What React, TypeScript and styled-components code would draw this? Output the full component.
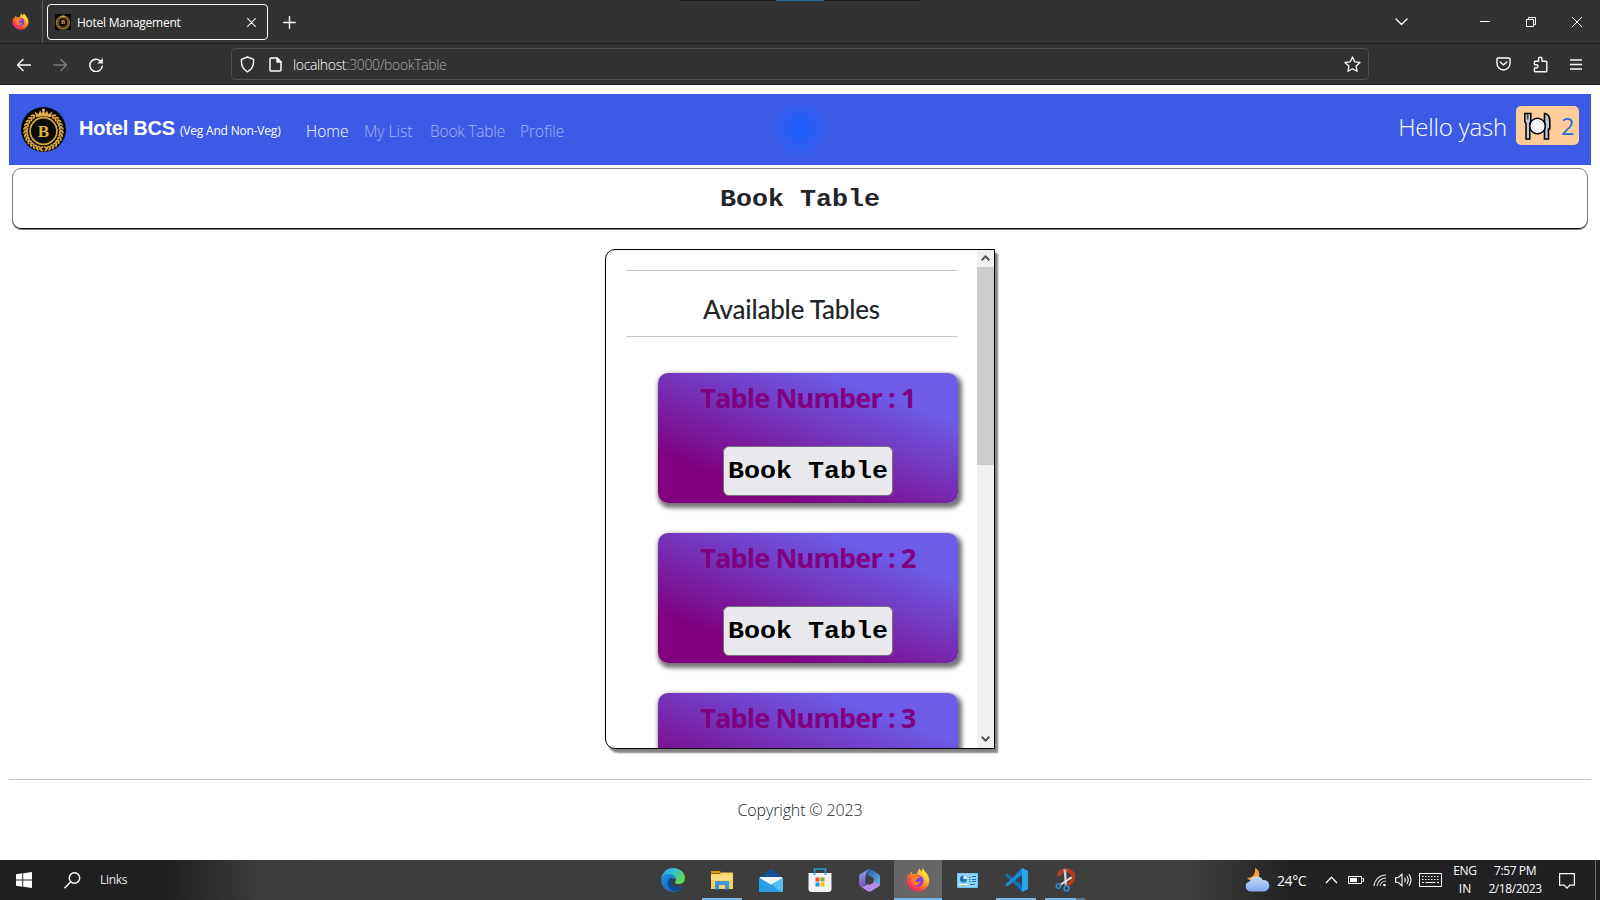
import React from "react";
import styled, { createGlobalStyle } from "styled-components";

const Global = createGlobalStyle`
  * { box-sizing: border-box; }
  html, body { margin: 0; padding: 0; background: #fff; overflow: hidden; }
  body { font-family: "Open Sans", "Noto Sans", sans-serif; color: #212529; }
  svg { display: block; flex: none; }
`;

const Screen = styled.div`
  width: 1600px;
  height: 900px;
  display: flex;
  flex-direction: column;
  overflow: hidden;
`;

const Label = styled.span<{ $size: number; $track?: number; $color?: string; $ml?: number; $w?: number; $drop?: number; $light?: boolean }>`
  flex: none;
  white-space: nowrap;
  font-size: ${(p) => p.$size}px;
  font-weight: ${(p) => (p.$light ? 350 : 400)};
  line-height: 20px;
  letter-spacing: ${(p) => p.$track ?? 0}px;
  color: ${(p) => p.$color ?? "#fff"};
  margin-left: ${(p) => p.$ml ?? 0}px;
  margin-top: ${(p) => p.$drop ?? 0}px;
  width: ${(p) => (p.$w ? `${p.$w}px` : "auto")};
`;

const Slot = styled.div<{ $ml?: number; $mt?: number }>`
  flex: none;
  margin-left: ${(p) => p.$ml ?? 0}px;
  margin-top: ${(p) => p.$mt ?? 0}px;
`;

/* Browser chrome */
const TabStrip = styled.header`
  height: 44px;
  flex: none;
  display: flex;
  align-items: center;
  background: #323232;
  border-bottom: 1px solid #1e1e1e;
  position: relative;
`;
const TopHandle = styled.div`
  position: absolute;
  top: 0;
  left: 680px;
  width: 241px;
  height: 1px;
  background: linear-gradient(90deg, #1c1c1c 96px, #2a6f9f 96px, #2a6f9f 144px, #1c1c1c 144px);
`;
const PinnedCell = styled.div`
  width: 43px;
  height: 43px;
  padding: 13px 0 0 12px;
  border-right: 1px solid #5c5c5c;
`;
const Tab = styled.div`
  width: 221px;
  height: 36px;
  margin: 1px 0 0 4px;
  padding: 0 11px 0 7px;
  border: 1px solid #fff;
  border-radius: 4px;
  display: flex;
  align-items: center;
`;
const Spacer = styled.div`
  flex: 1;
`;
const WindowButtons = styled.div`
  display: flex;
  align-items: center;
  padding-right: 18px;
`;
const Toolbar = styled.div`
  height: 41px;
  flex: none;
  display: flex;
  align-items: center;
  background: #323232;
  border-bottom: 1px solid #1e1e1e;
  padding: 0 18px 0 17px;
`;
const AddressBar = styled.div`
  width: 1138px;
  height: 32px;
  margin-left: 128px;
  padding: 0 7px 0 8px;
  border: 1px solid #505050;
  border-radius: 4px;
  display: flex;
  align-items: center;
`;

/* Web page */
const Page = styled.main`
  height: 775px;
  flex: none;
  padding: 9px 9px 0;
  display: flex;
  flex-direction: column;
`;
const NavBar = styled.nav`
  height: 71px;
  flex: none;
  padding: 0 12px;
  display: flex;
  align-items: flex-start;
  background: radial-gradient(circle at 791px 35px, #1a62fd 0, #2a5ef2 14px, #3c5ae6 30px);
`;
const Brand = styled(Label)`
  font-family: "Liberation Sans", Arial, sans-serif;
  font-weight: 700;
`;
const CartBadge = styled.div`
  width: 63px;
  height: 39px;
  margin: 12px 0 0 9px;
  padding-left: 7px;
  border-radius: 5px;
  background: #fecb9b;
  display: flex;
  align-items: center;
`;
const CourierText = styled.span<{ $color: string }>`
  display: inline-block;
  font-family: "Liberation Mono", "Courier New", monospace;
  font-weight: 700;
  font-size: 26.67px;
  line-height: 30px;
  margin-top: 2px;
  transform: scaleY(0.9);
  color: ${(p) => p.$color};
  white-space: nowrap;
`;
const TitleBox = styled.section`
  height: 62px;
  flex: none;
  margin: 3px 3px 0;
  border: 1px solid #857f82;
  border-radius: 9px;
  box-shadow: inset 0 -1px 0 #111;
  display: flex;
  align-items: center;
  justify-content: center;
`;
const Panel = styled.section`
  width: 390px;
  height: 500px;
  flex: none;
  margin: 19px auto 0;
  border: 1px solid #000;
  border-radius: 10px 0 0 10px;
  box-shadow: 3px 4px 2px #868286;
  display: flex;
  overflow: hidden;
`;
const PanelBody = styled.div`
  flex: 1;
  padding: 20px 20px 0;
  overflow: hidden;
`;
const PanelHeading = styled.h2`
  margin: 0;
  height: 67px;
  border-top: 1px solid #c7c8c9;
  border-bottom: 1px solid #c7c8c9;
  padding-top: 22px;
  text-align: center;
  font-family: Lato, sans-serif;
  font-weight: 500;
  font-size: 26px;
  line-height: 32px;
  letter-spacing: -0.2px;
`;
const CardList = styled.div`
  padding: 36px 0 0 32px;
  display: flex;
  flex-direction: column;
  gap: 30px;
`;
const Card = styled.article`
  width: 300px;
  height: 130px;
  flex: none;
  border-radius: 10px;
  background: linear-gradient(20deg, #800080 20%, #6c5ce7 80%);
  box-shadow: 2px 3px 4px 2px #787478;
  display: flex;
  flex-direction: column;
  align-items: center;
`;
const CardTitle = styled.h3`
  margin: 5px 0 0;
  height: 40px;
  font-size: 27px;
  line-height: 40px;
  font-weight: 700;
  letter-spacing: -0.85px;
  color: #800080;
  white-space: nowrap;
`;
const BookButton = styled.button`
  width: 170px;
  height: 50px;
  margin-top: 28px;
  padding: 0;
  border: 1px solid #77717f;
  border-radius: 6px;
  background: #e9e9ed;
  display: flex;
  align-items: center;
  justify-content: center;
`;
const ScrollTrack = styled.div`
  width: 17px;
  flex: none;
  background: #f0f0f0;
  display: flex;
  flex-direction: column;
  align-items: center;
  justify-content: space-between;
`;
const ScrollArrow = styled.div`
  height: 17px;
  padding-top: 5px;
`;
const ScrollThumb = styled.div`
  width: 17px;
  height: 198px;
  margin-bottom: auto;
  background: #cdcdcd;
`;
const Footer = styled.footer`
  margin-top: 30px;
  border-top: 1px solid #c3c3c3;
  padding-top: 20px;
  display: flex;
  justify-content: center;
`;

/* Taskbar */
const TaskBar = styled.footer`
  height: 40px;
  flex: none;
  display: flex;
  align-items: center;
  background: linear-gradient(90deg, #202022 0, #202022 170px, #3c3c3c 260px, #3e3e3e 1190px, #222224 1290px, #202022 1600px);
`;
const App48 = styled.div<{ $active?: boolean; $line?: number }>`
  width: 48px;
  height: 40px;
  margin-right: 1px;
  flex: none;
  display: flex;
  align-items: center;
  justify-content: center;
  background: ${(p) => (p.$active ? "#666" : "transparent")};
  background-image: ${(p) => (p.$line ? "linear-gradient(#76b5e8, #76b5e8)" : "none")};
  background-size: ${(p) => p.$line ?? 0}px 2px;
  background-position: bottom center;
  background-repeat: no-repeat;
`;
const GroupEdge = styled.div`
  width: 9px;
  height: 2px;
  margin-left: -14px;
  align-self: flex-end;
  flex: none;
  background: #4d7699;
`;
const Stack = styled.div<{ $w: number; $ml: number }>`
  width: ${(p) => p.$w}px;
  margin-left: ${(p) => p.$ml}px;
  flex: none;
  display: flex;
  flex-direction: column;
  align-items: center;
  gap: 0;
  & > span { line-height: 18px; }
`;
const DesktopEdge = styled.div`
  width: 1px;
  height: 40px;
  margin-left: 20px;
  background: #6a6a6a;
`;

const Firefox = ({ s, id }: { s: number; id: string }) => (
  <svg width={s} height={s} viewBox="0 0 24 24">
    <defs>
      <linearGradient id={id} x1="0.85" y1="0.1" x2="0.2" y2="0.95">
        <stop offset="0" stopColor="#fff04a" />
        <stop offset="0.4" stopColor="#ff9a2a" />
        <stop offset="0.7" stopColor="#ff4a42" />
        <stop offset="1" stopColor="#e8246e" />
      </linearGradient>
    </defs>
    <path fill={`url(#${id})`} d="M12 23.5C5.6 23.5.7 18.8.7 12.7c0-2.600.8-4.900 2-6.600l.7 1.700c.4-1.700 1.200-3.100 2.300-4.200l.7 2.900c1.200-.5 2.700-.6 4-.1 1.300-1 1.100-3.800 3.300-6.200.3 1.800 1 2.600 2 3.400C16.100 1.900 16.400.9 17 .2c.8 3 6.300 5.600 6.300 12.400 0 6.200-4.900 10.900-11.300 10.900z" />
    <circle cx="11.800" cy="12.800" r="5.600" fill="#7542e5" />
    <path fill="#ff7a2c" d="M5.600 7.600c2-1.200 4.200-.9 5.700.4l3.300.5c-.6 1.200-2.200 1.500-3.300 2-1 .6-.8 1.800-2.100 2.300 1.400 1.700 4 1.600 5.500.2-.7 3-3 4.700-5.700 4.200-3.600-.7-5.100-4.600-3.400-9.600z" />
    <path fill="#ffd53c" opacity=".85" d="M16.600 1.700c4.600 4.100 6.400 8.400 4.500 13.400-.2-3.500-2.200-6.600-4.700-8.300-.8-1.700-.4-3.400.2-5.100z" />
  </svg>
);

const HotelLogo = ({ s, square }: { s: number; square?: boolean }) => {
  const leaves = [];
  for (let a = -54; a <= 235; a += 11.5) leaves.push(a);
  return (
    <svg width={s} height={s} viewBox="0 0 45 45">
      {square ? <rect width="45" height="45" fill="#070707" /> : <circle cx="22.500" cy="22.500" r="22.500" fill="#070707" />}
      <g fill="#d9a740" transform="translate(22.500 24)">
        {leaves.map((a) => (
          <g key={a} transform={`rotate(${a}) translate(17.700 0)`}>
            <ellipse rx="1" ry="2.500" cx="1.300" transform={`rotate(${a > 90 ? 38 : -38})`} />
            <ellipse rx="1" ry="2" cx="-1.200" transform={`rotate(${a > 90 ? -20 : 20})`} />
          </g>
        ))}
      </g>
      <circle cx="22.500" cy="24" r="13.400" fill="#0b0b0b" stroke="#d9a740" strokeWidth="1.700" />
      <path fill="#e5b04a" d="M15.500 10.200L13.500 4.500l4 2.700L19 3.500l2 3L22.500 1.500 24 6.500l2-3 1.500 3.700 4-2.700-2 5.700c-5-1.300-9-1.300-14 0z" />
      <circle cx="22.500" cy="3" r="1.500" fill="#e5b04a" />
      <text x="22.500" y="29.500" textAnchor="middle" fontFamily="Liberation Serif, serif" fontWeight="700" fontSize="17" fill="#e0ad48">B</text>
    </svg>
  );
};

const line = { fill: "none", stroke: "#fbfbfe", strokeWidth: 1.5, strokeLinecap: "round" as const, strokeLinejoin: "round" as const };

const Arrow = ({ flip }: { flip?: boolean }) => (
  <svg width="14" height="14" viewBox="0 0 14 14" {...line} stroke={flip ? "#7c7c7c" : "#fbfbfe"}>
    <path d={flip ? "M.5 7h13M8 1.500L13.500 7 8 12.500" : "M13.500 7H.5M6 1.500L.5 7 6 12.500"} />
  </svg>
);

const Plate = () => (
  <svg width="28" height="28" viewBox="0 0 28 28">
    <path d="M1.800 1.500h6v8l-1 2V27H3V11.500l-1.200-2z" fill="#b9cbd8" stroke="#000" strokeWidth="1.500" />
    <path d="M4.800 2v5.500" stroke="#000" strokeWidth="1" />
    <path d="M21.500 27V1.500c3.500.3 5.300 3 5.300 8V17H25.500v10z" fill="#b9cbd8" stroke="#000" strokeWidth="1.600" />
    <circle cx="14.500" cy="14" r="7.800" fill="#fff" stroke="#000" strokeWidth="1.500" />
    <circle cx="14.500" cy="14" r="5.300" fill="#f9f9fb" stroke="#e2e2e8" />
  </svg>
);

const Edge = () => (
  <svg width="24" height="24" viewBox="0 0 24 24">
    <defs>
      <linearGradient id="edgeTop" x1="0" y1="0" x2="1" y2=".5"><stop offset="0" stopColor="#2f9fe6" /><stop offset=".55" stopColor="#35c2c8" /><stop offset="1" stopColor="#5fdc55" /></linearGradient>
      <linearGradient id="edgeBody" x1="0" y1="0" x2=".6" y2="1"><stop offset="0" stopColor="#1f93dd" /><stop offset="1" stopColor="#1565b8" /></linearGradient>
    </defs>
    <path fill="url(#edgeBody)" d="M0 12C1 7 5 5.500 9 6c4 .500 6 3 6 5.500-2-2-5-1-5.500 1.500-.5 4 4 7 8 6.500 2-.2 3.500-1 4.800-1.800C20.500 21.500 16.500 24 12 24 5.500 24 0 18.800 0 12z" />
    <path fill="#114a8b" d="M8.500 10.500C5.500 13 6 19 11 22.500c4 1.500 8.500-.5 11-4.200.2-.6-.2-.8-.7-.5-3.500 1.800-8 1.400-10.300-1.400-1.500-1.800-1.600-4 .5-6-1-.500-2-.400-3 .1z" />
    <path fill="url(#edgeTop)" d="M.1 11C1 4.500 6 0 12 0c7 0 12 4.800 12 10 0 4-3 6-6.200 6-2.800 0-4.300-1-3.800-1.800 1.800-2 1.300-4.500-.5-6.200C9.500 4.500 2.500 5.500.1 11z" />
  </svg>
);
const Explorer = () => (
  <svg width="22" height="19" viewBox="0 0 22 19">
    <path fill="#d99a16" d="M0 0h9l1.500 2.500H0z" />
    <path fill="#f9cf5d" d="M0 3h9l1.500-1.500H22V18H0z" />
    <path fill="#fbdc83" d="M0 4h22v5H0z" />
    <path fill="#3c97dd" d="M4 10h14v8.500h-4v-4.500H8v4.500H4z" />
  </svg>
);
const Mail = () => (
  <svg width="24" height="23" viewBox="0 0 24 23">
    <path fill="#174f96" d="M0 8.500L12 0l12 8.500V12H0z" />
    <path fill="#f4f6f8" d="M1 8h22v4l-11 4L1 12z" />
    <path fill="#2b9fe6" d="M0 8.500l24 14.500H1a1 1 0 0 1-1-1z" />
    <path fill="#52c1f2" d="M24 8.500V22a1 1 0 0 1-1 1h-1L12 15.600z" />
  </svg>
);
const Store = () => (
  <svg width="24" height="24" viewBox="0 0 24 24">
    <path fill="none" stroke="#2b9bd6" strokeWidth="1.600" d="M6.500 7V1h11v6" />
    <path fill="#f3f3f5" d="M.5 5h23v16a3 3 0 0 1-3 3h-17a3 3 0 0 1-3-3z" />
    <path fill="#2b9bd6" d="M5.700 5h1.600v2H5.700zM16.700 5h1.600v2h-1.600z" />
    <path fill="#ee4f28" d="M7.500 9.500h4v4h-4z" /><path fill="#7ab51d" d="M12.500 9.500h4v4h-4z" />
    <path fill="#1f9fe0" d="M7.500 14.500h4v4h-4z" /><path fill="#fbb813" d="M12.500 14.500h4v4h-4z" />
  </svg>
);
const M365 = () => (
  <svg width="21" height="23" viewBox="0 0 21 23">
    <defs>
      <linearGradient id="mTop" x1="0" y1="0" x2="1" y2="1"><stop offset="0" stopColor="#2f55a5" /><stop offset="1" stopColor="#61c0f2" /></linearGradient>
      <linearGradient id="mLeft" x1="0" y1="0" x2="0" y2="1"><stop offset="0" stopColor="#86a5e8" /><stop offset="1" stopColor="#7a55c0" /></linearGradient>
    </defs>
    <path fill="url(#mTop)" d="M8 .8C9.500-.1 11-.1 13 1l6 3.700c1.400.9 2 1.800 2 3.300V15c0 1-.5 2-1.300 2.500L14.500 14V9.500L8.500 6z" />
    <path fill="url(#mLeft)" d="M10 0L1.800 4.700C.7 5.400 0 6.300 0 7.700V15c0 1.500 1 2.700 2.500 2.700 1 0 2-.6 4-1.900V9c0-3 .5-6 3.500-9z" />
    <path fill="#b88bea" d="M1 17c1.500 1.200 3.500.7 5.500-.6l4-2.400 4-2 6.300 3.600c-.2 1-.9 1.900-1.800 2.500l-6.500 4c-1.500.9-2.700.9-4.200 0z" />
    <path fill="#3e3e44" d="M10.500 6.800l4 2.400v4.400l-4 2.400-4-2.400V9.200z" />
  </svg>
);
const ControlPanel = () => (
  <svg width="21" height="15" viewBox="0 0 21 15">
    <rect width="21" height="15" rx="1" fill="#6fc5f2" /><rect x="1" y="1" width="19" height="13" fill="#8ed6fa" />
    <circle cx="6.500" cy="6" r="3.500" fill="#1f6fae" /><path fill="#e9f6fd" d="M6.500 6V2.500A3.500 3.500 0 0 1 10 6z" />
    <path stroke="#1f6fae" d="M12 4.500h1.500M15 3.500h4M12 6.500h1.500M15 6.500h4M12 8.500h1.500M15 8.500h4" /><path stroke="#f5f9fb" d="M2 11.500h9" /><path stroke="#dba92e" d="M4 12.500h3" /><path stroke="#1f6fae" d="M13 11.500h5" />
  </svg>
);
const VSCode = () => (
  <svg width="24" height="24" viewBox="0 0 24 24">
    <path fill="#1172b8" d="M1.200 7.300l1.300-1.200c.4-.3.9-.3 1.300 0L18 17v6.800z" />
    <path fill="#1a8ad4" d="M1.200 16.700l1.300 1.200c.4.300.9.300 1.300 0L18 7V.2z" />
    <path fill="#2ba5ee" d="M17 .2c.4-.3.9-.300 1.400 0L23 2.300c.6.300 1 .8 1 1.400v16.600c0 .6-.4 1.100-1 1.400l-4.600 2.100c-.5.300-1 .3-1.400 0 .6.200 1-.2 1-.8V1c0-.600-.4-1-1-.8z" />
  </svg>
);
const Snip = () => (
  <svg width="21" height="24" viewBox="0 0 21 24">
    <path fill="none" stroke="#b93a1c" strokeWidth="4" d="M4.500 8C3.500 4 7 2 11 2.200c5.500.3 8 4 7.200 8-.7 3.200-3.200 5.800-6.700 5.800" />
    <path fill="#c9ced2" d="M8.500 1.500l2.700 0 .6 15-2 1z" /><path fill="#e7eaec" d="M16 8.500l1 1.800L5 18l-.7-1.500z" />
    <circle cx="3.500" cy="18" r="2.200" fill="none" stroke="#2f8fd0" strokeWidth="1.500" /><circle cx="11.500" cy="20.500" r="2.500" fill="none" stroke="#2f8fd0" strokeWidth="1.500" />
  </svg>
);
const Weather = () => (
  <svg width="25" height="24" viewBox="0 0 25 24">
    <defs><linearGradient id="cloud" x1="0" y1="0" x2="0" y2="1"><stop offset="0" stopColor="#c7dcfb" /><stop offset="1" stopColor="#84aaf0" /></linearGradient></defs>
    <path fill="#f5a52c" d="M10 0c4 1.500 5.500 6 3.500 9.500-2 3.500-8 4.500-11.500.5C8 10 11 5 10 0z" />
    <path fill="url(#cloud)" d="M5.500 23.500a5 5 0 0 1-.7-9.900A7 7 0 0 1 17.700 12a5.800 5.800 0 1 1 1.500 11.500z" />
  </svg>
);

const tables = [
  { number: 1, bookable: true },
  { number: 2, bookable: true },
  { number: 3, bookable: false },
];

export default function App() {
  return (
    <Screen>
      <Global />
      <TabStrip>
        <TopHandle />
        <PinnedCell><Firefox s={17} id="foxSmall" /></PinnedCell>
        <Tab>
          <HotelLogo s={16} square />
          <Label $size={12} $ml={6} $track={-0.24} $drop={2}>Hotel Management</Label>
          <Spacer />
          <svg width="9" height="9" viewBox="0 0 9 9" {...line} strokeWidth={1.1}><path d="M.7.700l7.600 7.600M8.300.7L.7 8.300" /></svg>
        </Tab>
        <Slot $ml={15} $mt={2}>
          <svg width="13" height="13" viewBox="0 0 13 13" {...line} strokeWidth={1.4}><path d="M6.500.8v11.400M.8 6.500h11.400" /></svg>
        </Slot>
        <Spacer />
        <WindowButtons>
          <svg width="13" height="8" viewBox="0 0 13 8" {...line} strokeWidth={1.400}><path d="M1 1l5.500 5.500L12 1" /></svg>
          <Slot $ml={72}><svg width="10" height="1"><path d="M0 .5h10" stroke="#fff" /></svg></Slot>
          <Slot $ml={36}><svg width="10" height="10" fill="none" stroke="#fff"><path d="M.5 2.500h7v7h-7zM2.500 2.500v-2h7v7h-2" /></svg></Slot>
          <Slot $ml={36}><svg width="10" height="10" stroke="#fff"><path d="M0 0l10 10M10 0L0 10" /></svg></Slot>
        </WindowButtons>
      </TabStrip>

      <Toolbar>
        <Slot $mt={1}><Arrow /></Slot>
        <Slot $ml={22} $mt={1}><Arrow flip /></Slot>
        <Slot $ml={22} $mt={1}>
          <svg width="14" height="14" viewBox="0 0 14 14" {...line}><path d="M12.300 4A6.200 6.200 0 1 0 13.200 8.300" /><path d="M13.600.8v4.400H9.200z" fill="#fbfbfe" strokeWidth=".5" /></svg>
        </Slot>
        <AddressBar>
          <svg width="15" height="17" viewBox="0 0 15 17" {...line} strokeWidth={1.400}><path d="M7.500 1l6 2.300c.5 5.200-1.200 10-6 12.500-4.800-2.500-6.500-7.300-6-12.500z" /></svg>
          <Slot $ml={14}><svg width="13" height="15" viewBox="0 0 13 15" {...line}><path d="M2 1h6l4 4v8a1 1 0 0 1-1 1H2a1 1 0 0 1-1-1V2a1 1 0 0 1 1-1z" /><path d="M8 1v4h4z" fill="#fbfbfe" /></svg></Slot>
          <Label $size={14} $light $track={-0.35} $ml={11} $color="#a8a8a8" $drop={2}><Label $size={14} $light $track={-0.35}>localhost</Label>:3000/bookTable</Label>
          <Spacer />
          <svg width="17" height="17" viewBox="0 0 17 17" {...line} strokeWidth={1.300}><path d="M8.500 1l2.200 4.800 5.300.6-3.900 3.600 1 5.300-4.600-2.600-4.600 2.600 1-5.300L1 6.400l5.300-.6z" /></svg>
        </AddressBar>
        <Spacer />
        <svg width="15" height="14" viewBox="0 0 15 14" {...line} strokeWidth={1.400}><path d="M2 1h11a1 1 0 0 1 1 1v4.500a6.500 6.500 0 0 1-13 0V2a1 1 0 0 1 1-1zM4.300 5l3.200 3 3.200-3" /></svg>
        <Slot $ml={22}>
          <svg width="15" height="17" viewBox="0 0 15 17" {...line} strokeWidth={1.400}><path d="M2.200 5.200h3.300V3a1.700 1.700 0 0 1 3.500 0v2.200h4a.8.8 0 0 1 .8.8v9a.8.8 0 0 1-.8.8H2.200a.8.8 0 0 1-.8-.8v-3h2a1.600 1.600 0 0 0 0-3.300h-2V6a.8.8 0 0 1 .8-.8z" /></svg>
        </Slot>
        <Slot $ml={22}><svg width="12" height="11" stroke="#fbfbfe" strokeWidth="1.300"><path d="M0 1h12M0 5.500h12M0 10h12" /></svg></Slot>
      </Toolbar>

      <Page>
        <NavBar>
          <Slot $mt={13}><HotelLogo s={45} /></Slot>
          <Brand $size={20} $track={-0.2} $ml={13} $drop={24}>Hotel BCS</Brand>
          <Label $size={12} $track={-0.2} $ml={5} $drop={27} $w={102}>(Veg And Non-Veg)</Label>
          <Label $size={15.5} $light $ml={24} $drop={27} $w={58}>Home</Label>
          <Label $size={15.5} $light $drop={27} $w={66} $color="#a9b6f4">My List</Label>
          <Label $size={15.5} $light $track={-0.2} $drop={27} $w={90} $color="#a9b6f4">Book Table</Label>
          <Label $size={15.5} $light $drop={27} $color="#a9b6f4">Profile</Label>
          <Spacer />
          <Label $size={24} $light $track={-0.2} $drop={23}>Hello yash</Label>
          <CartBadge>
            <Plate />
            <Label $size={23.5} $ml={10} $color="#1f70d4" $drop={1}>2</Label>
          </CartBadge>
        </NavBar>
        <TitleBox><CourierText $color="#212529">Book Table</CourierText></TitleBox>
        <Panel>
          <PanelBody>
            <PanelHeading>Available Tables</PanelHeading>
            <CardList>
              {tables.map((t) => (
                <Card key={t.number}>
                  <CardTitle>Table Number : {t.number}</CardTitle>
                  {t.bookable && <BookButton><CourierText $color="#000">Book Table</CourierText></BookButton>}
                </Card>
              ))}
            </CardList>
          </PanelBody>
          <ScrollTrack>
            <ScrollArrow><svg width="9" height="6" fill="none" stroke="#505050" strokeWidth="2"><path d="M.7 5.200L4.500 1.400l3.800 3.800" /></svg></ScrollArrow>
            <ScrollThumb />
            <ScrollArrow><svg width="9" height="6" fill="none" stroke="#505050" strokeWidth="2"><path d="M.7.800l3.800 3.800L8.300.8" /></svg></ScrollArrow>
          </ScrollTrack>
        </Panel>
        <Footer><Label $size={16} $light $track={-0.15} $color="#212529">Copyright © 2023</Label></Footer>
      </Page>

      <TaskBar>
        <Slot $ml={16}><svg width="16" height="16" fill="#fff"><path d="M0 2.200L6.300 1.300v6.200H0zM7.200 1.200L16 0v7.500H7.200zM0 8.400h6.300v6.300L0 13.800zM7.200 8.400H16V16l-8.800-1.200z" /></svg></Slot>
        <Slot $ml={32}><svg width="17" height="17" fill="none" stroke="#fff" strokeWidth="1.400"><circle cx="10.500" cy="6" r="5.200" /><path d="M6.700 9.800L.5 16.200" /></svg></Slot>
        <Label $size={12} $track={-0.3} $ml={19} $color="#e6e6e6">Links</Label>
        <Spacer />
        <App48><Edge /></App48>
        <App48 $line={40}><Explorer /></App48>
        <App48><Mail /></App48>
        <App48><Store /></App48>
        <App48><M365 /></App48>
        <App48 $active $line={48}><Firefox s={24} id="foxBig" /></App48>
        <App48><ControlPanel /></App48>
        <App48 $line={40}><VSCode /></App48>
        <App48 $line={40}><Snip /></App48>
        <GroupEdge />
        <Slot $ml={160}><Weather /></Slot>
        <Label $size={14} $track={-0.4} $ml={7} $w={48} $drop={1}>24°C</Label>
        <svg width="13" height="8" fill="none" stroke="#fff" strokeWidth="1.300"><path d="M1 7l5.500-5.700L12 7" /></svg>
        <Slot $ml={10}><svg width="16" height="10"><path d="M.5 1.500h13v7H.5zM14 3.500h1.500v3H14" fill="none" stroke="#fff" /><path d="M2 3h7v4H2z" fill="#fff" /></svg></Slot>
        <Slot $ml={9}><svg width="14" height="14" fill="none" stroke="#d8d8d8" strokeWidth="1.100"><path d="M1 13A12 12 0 0 1 13 2M4 13a9 9 0 0 1 9-8M7 13a6 6 0 0 1 6-5" /><circle cx="11.500" cy="12" r="1.300" fill="#fff" stroke="none" /></svg></Slot>
        <Slot $ml={8}><svg width="17" height="14" fill="none" stroke="#fff" strokeWidth="1.100"><path d="M.6 4.700h2.600L7 1.200v11.600L3.200 9.300H.6zM9.500 4.700q1.600 2.300 0 4.600M11.800 3q2.800 4 0 8M14 1.300q3.900 5.700 0 11.400" /></svg></Slot>
        <Slot $ml={7}><svg width="23" height="14" fill="none" stroke="#fff"><path d="M.5.500h22v13H.5z" /><path d="M3 3.500h17M3 6.500h17" strokeDasharray="1.500 1.500" /><path d="M3 9.500h2M6.500 9.500h10M18 9.500h2" /></svg></Slot>
        <Stack $w={30} $ml={8}><Label $size={12} $track={-0.3}>ENG</Label><Label $size={12}>IN</Label></Stack>
        <Stack $w={56} $ml={7}><Label $size={12} $track={-0.4}>7:57 PM</Label><Label $size={12} $track={-0.4}>2/18/2023</Label></Stack>
        <Slot $ml={16} $mt={1}><svg width="16" height="16" fill="none" stroke="#fff" strokeWidth="1.200"><path d="M.6.600h14.800v11.500h-4.600L8 15.200l-2.800-3.100H.6z" /></svg></Slot>
        <DesktopEdge />
        <Slot $ml={4} />
      </TaskBar>
    </Screen>
  );
}
